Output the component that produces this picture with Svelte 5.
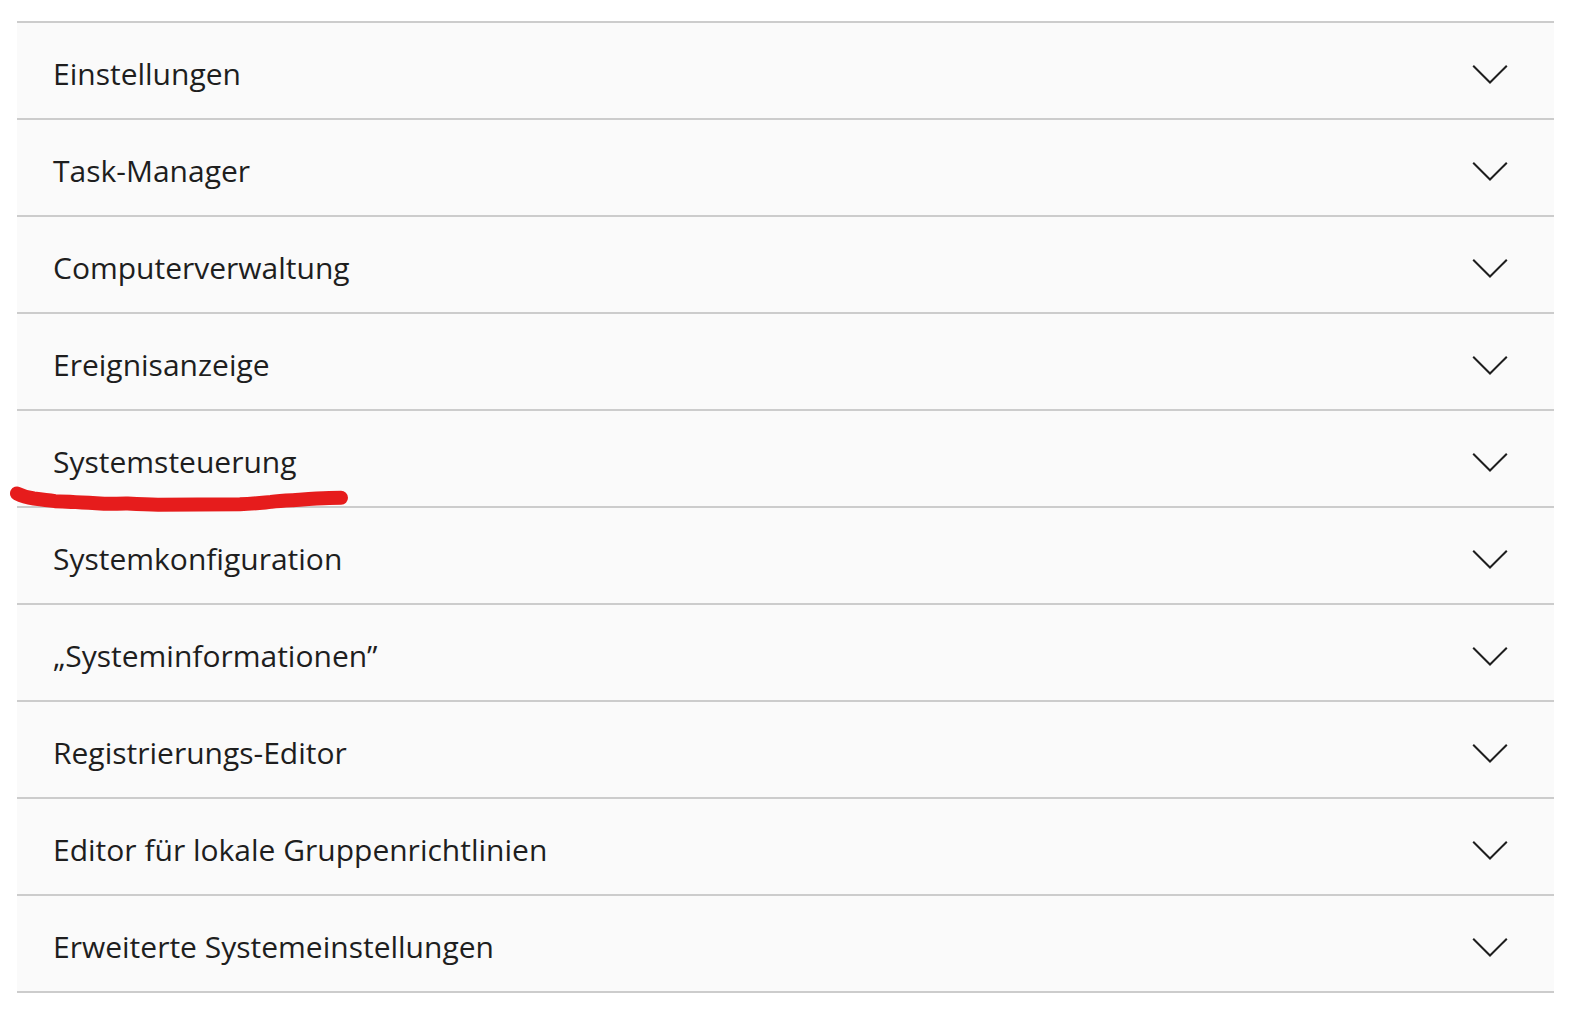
<script lang="ts">
  interface Tool {
    title: string;
    marked?: boolean;
  }

  const tools: Tool[] = [
    { title: 'Einstellungen' },
    { title: 'Task-Manager' },
    { title: 'Computerverwaltung' },
    { title: 'Ereignisanzeige' },
    { title: 'Systemsteuerung', marked: true },
    { title: 'Systemkonfiguration' },
    { title: '„Systeminformationen”' },
    { title: 'Registrierungs-Editor' },
    { title: 'Editor für lokale Gruppenrichtlinien' },
    { title: 'Erweiterte Systemeinstellungen' },
  ];
</script>

<main class="page">
  <ul class="accordion">
    {#each tools as tool}
      <li class="item">
        <button type="button" class="header" aria-expanded="false">
          <span class="title">{tool.title}</span>
          <svg class="chevron" viewBox="0 0 36 20" aria-hidden="true">
            <path d="M1.2 1.7 L18 18.5 L34.8 1.7" />
          </svg>
        </button>
        {#if tool.marked}
          <!-- hand-drawn marker line -->
          <svg class="marker" viewBox="0 0 340 30" aria-hidden="true">
            <path
              d="M7 10.500 C11 12.500 17 14.500 24 15.500 C31 16.300 37 17 45 18.200 C62 18.700 78 19.700 94 20.700 C101 21 108 20.500 116 20.500 C128 21.200 136 21.700 148 21.700 L230 21.300 C243 20.700 252 19.700 261 18.900 C269 17.700 275 17.500 283 17.200 C295 16.300 307 15.200 319 15 L331 14.800"
            />
          </svg>
        {/if}
      </li>
    {/each}
  </ul>
</main>

<style>
  :global(body) {
    margin: 0;
    background: #fff;
  }

  .page {
    padding: 21px 26px 18px 17px;
    font-family: 'Segoe UI', 'Open Sans', 'Noto Sans', sans-serif;
    color: #1e1e1e;
  }

  .accordion {
    margin: 0;
    padding: 0;
    list-style: none;
    border-top: 2px solid #ccc;
  }

  .item {
    position: relative;
    border-bottom: 2px solid #ccc;
    background: #fafafa;
  }

  .header {
    display: flex;
    align-items: center;
    justify-content: space-between;
    box-sizing: border-box;
    width: 100%;
    padding: 30px 46px 23px 36px;
    border: 0;
    background: none;
    color: inherit;
    font: inherit;
    font-size: 30px;
    line-height: 42px;
    text-align: left;
    cursor: pointer;
  }

  .chevron {
    flex: none;
    width: 36px;
    height: 20px;
    fill: none;
    stroke: #1e1e1e;
    stroke-width: 2;
  }

  .marker {
    position: absolute;
    z-index: 1;
    left: -7px;
    bottom: -7px;
    width: 340px;
    height: 30px;
    fill: none;
    stroke: #e61c1c;
    stroke-width: 14;
    stroke-linecap: round;
    stroke-linejoin: round;
    pointer-events: none;
  }
</style>
